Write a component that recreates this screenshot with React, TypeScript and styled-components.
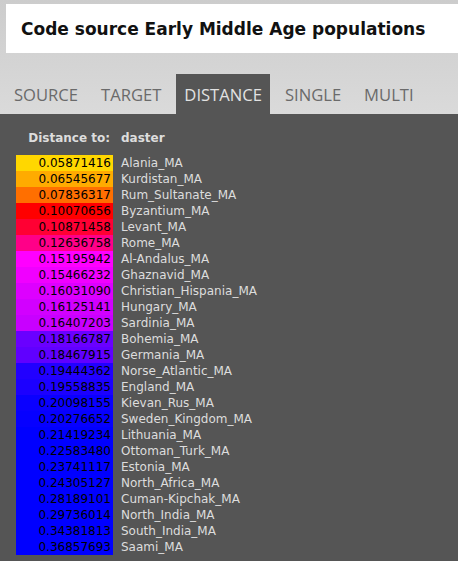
import React, { useState } from 'react';
import styled, { createGlobalStyle } from 'styled-components';

const GlobalStyle = createGlobalStyle`
  html, body {
    margin: 0;
    padding: 0;
    height: 100%;
  }
  body {
    background: #555555;
    font-family: "DejaVu Sans", Verdana, sans-serif;
    overflow: hidden;
  }
`;

const Page = styled.div`
  min-height: 561px;
  display: flex;
  flex-direction: column;
`;

const Top = styled.div`
  background: linear-gradient(#cccccc, #dadada);
  padding: 4px 0 0 6px;
`;

const Header = styled.div`
  background: #ffffff;
  height: 49px;
  display: flex;
  align-items: center;
  padding-left: 15px;
`;

const Title = styled.h1`
  margin: 0;
  font-family: "DejaVu Sans", Verdana, sans-serif;
  font-size: 17px;
  font-weight: bold;
  color: #111;
  white-space: nowrap;
`;

const TabBar = styled.div`
  display: flex;
  gap: 7px;
  margin-top: 21px;
`;

const Tab = styled.div<{ $active?: boolean }>`
  height: 40px;
  display: flex;
  align-items: center;
  padding: 0 8px;
  font-family: "Open Sans", sans-serif;
  font-size: 16.6px;
  color: ${(p) => (p.$active ? '#e2e2e2' : '#6a6a6a')};
  background: ${(p) => (p.$active ? '#555555' : 'transparent')};
  cursor: pointer;
`;

const Content = styled.div`
  flex: 1;
  background: #555555;
  padding: 16px 0 6px 16px;
`;

const Grid = styled.div`
  display: grid;
  grid-template-columns: 97px auto;
  justify-content: start;
  font-size: 12px;
  line-height: 16px;
`;

const HeadLabel = styled.div`
  font-weight: bold;
  color: #dddddd;
  text-align: right;
  padding-right: 3px;
  margin-bottom: 9px;
`;

const HeadValue = styled.div`
  font-weight: bold;
  color: #dddddd;
  padding-left: 8px;
  margin-bottom: 9px;
`;

const Value = styled.div<{ $bg: string }>`
  background: ${(p) => p.$bg};
  color: #000;
  text-align: right;
  padding-right: 2px;
  height: 16px;
`;

const Name = styled.div`
  color: #dddddd;
  padding-left: 8px;
  height: 16px;
  white-space: nowrap;
`;

const rows: [string, string, string][] = [
  ['0.05871416', 'Alania_MA', '#ffd700'],
  ['0.06545677', 'Kurdistan_MA', '#ffab00'],
  ['0.07836317', 'Rum_Sultanate_MA', '#ff6f00'],
  ['0.10070656', 'Byzantium_MA', '#ff0000'],
  ['0.10871458', 'Levant_MA', '#ff0033'],
  ['0.12636758', 'Rome_MA', '#ff0088'],
  ['0.15195942', 'Al-Andalus_MA', '#ff00ff'],
  ['0.15466232', 'Ghaznavid_MA', '#f000ff'],
  ['0.16031090', 'Christian_Hispania_MA', '#dd00ff'],
  ['0.16125141', 'Hungary_MA', '#d200ff'],
  ['0.16407203', 'Sardinia_MA', '#c800ff'],
  ['0.18166787', 'Bohemia_MA', '#6a00ff'],
  ['0.18467915', 'Germania_MA', '#6000ff'],
  ['0.19444362', 'Norse_Atlantic_MA', '#2200ff'],
  ['0.19558835', 'England_MA', '#1c00ff'],
  ['0.20098155', 'Kievan_Rus_MA', '#0a00ff'],
  ['0.20276652', 'Sweden_Kingdom_MA', '#0600ff'],
  ['0.21419234', 'Lithuania_MA', '#0000ff'],
  ['0.22583480', 'Ottoman_Turk_MA', '#0000ff'],
  ['0.23741117', 'Estonia_MA', '#0000ff'],
  ['0.24305127', 'North_Africa_MA', '#0000ff'],
  ['0.28189101', 'Cuman-Kipchak_MA', '#0000ff'],
  ['0.29736014', 'North_India_MA', '#0000ff'],
  ['0.34381813', 'South_India_MA', '#0000ff'],
  ['0.36857693', 'Saami_MA', '#0000ff'],
];

const tabs = ['SOURCE', 'TARGET', 'DISTANCE', 'SINGLE', 'MULTI'];

const App: React.FC = () => {
  const [active, setActive] = useState('DISTANCE');

  return (
    <Page>
      <GlobalStyle />
      <Top>
        <Header>
          <Title>Code source Early Middle Age populations</Title>
        </Header>
        <TabBar>
          {tabs.map((t) => (
            <Tab key={t} $active={t === active} onClick={() => setActive(t)}>
              {t}
            </Tab>
          ))}
        </TabBar>
      </Top>
      <Content>
        <Grid>
          <HeadLabel>Distance to:</HeadLabel>
          <HeadValue>daster</HeadValue>
          {rows.map(([v, n, c]) => (
            <React.Fragment key={n}>
              <Value $bg={c}>{v}</Value>
              <Name>{n}</Name>
            </React.Fragment>
          ))}
        </Grid>
      </Content>
    </Page>
  );
};

export default App;
